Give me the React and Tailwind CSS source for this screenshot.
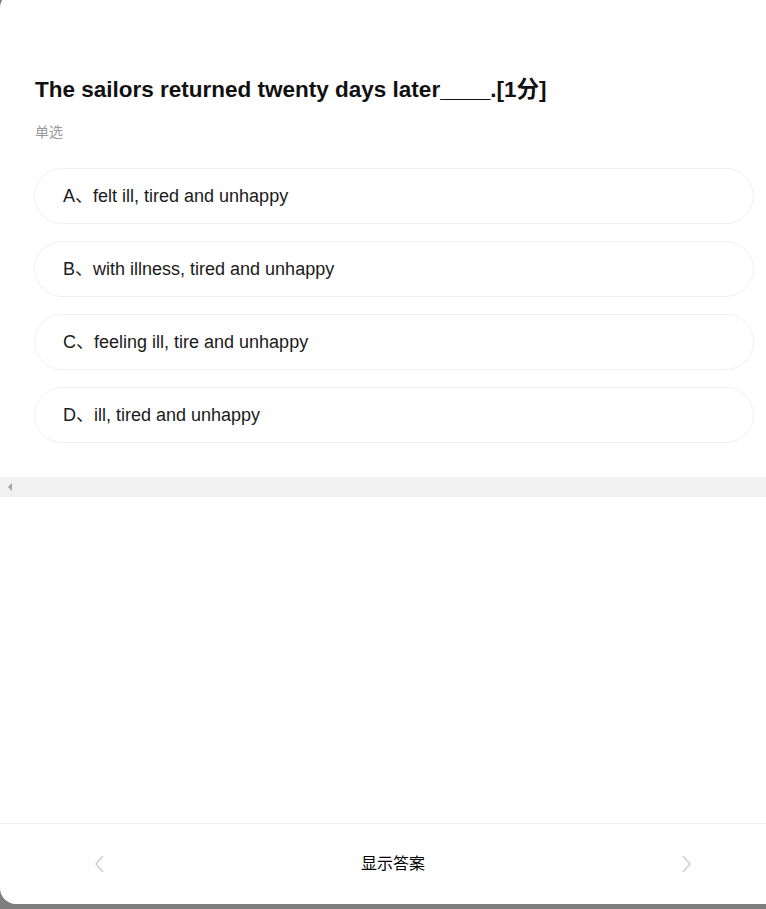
import React from 'react';

const options = [
    { key: 'A', text: 'felt ill, tired and unhappy' },
    { key: 'B', text: 'with illness, tired and unhappy' },
    { key: 'C', text: 'feeling ill, tire and unhappy' },
    { key: 'D', text: 'ill, tired and unhappy' },
];

function App() {
    return (
        <div className="w-[766px] h-[909px] overflow-hidden bg-[#7f7f7f]" style={{ fontFamily: '"Liberation Sans", Arial, "Noto Sans CJK SC", sans-serif' }}>
            <div className="-mt-[8px] h-[912px] bg-white rounded-l-[16px] flex flex-col">
                {/* question */}
                <div className="pt-[83px] px-[35px]">
                    <h1 className="text-[22.5px] leading-[30px] font-bold text-[#111]">
                        The sailors returned twenty days later____.[1分]
                    </h1>
                    <div className="mt-[17px] text-[14px] leading-[20px] text-[#999]">单选</div>
                </div>

                <div className="mt-[26px] pl-[34px] pr-[12px] flex flex-col gap-[17px]">
                    {options.map((o) => (
                        <div
                            key={o.key}
                            className="h-[56px] rounded-full border border-[#efefef] flex items-center pl-[28px] text-[18px] text-[#1a1a1a]"
                        >
                            {o.key}、{o.text}
                        </div>
                    ))}
                </div>

                {/* horizontal scrollbar */}
                <div className="mt-[34px] h-[20px] bg-[#f1f1f1] flex items-center pl-[7px]">
                    <svg width="6" height="10" viewBox="0 0 6 10">
                        <path d="M5 1 L1 5 L5 9 Z" fill="#a3a3a3" />
                    </svg>
                </div>

                <div className="flex-1" />

                {/* footer */}
                <div className="border-t border-[#f0f0f0] h-[81px] flex items-center justify-between pl-[94px] pr-[74px]">
                    <svg width="12" height="20" viewBox="0 0 12 20" fill="none">
                        <path d="M9 2 L2 10 L9 18" stroke="#cfcfcf" strokeWidth="1.5" />
                    </svg>
                    <button className="text-[16px] text-[#000]">显示答案</button>
                    <svg width="12" height="20" viewBox="0 0 12 20" fill="none">
                        <path d="M3 2 L10 10 L3 18" stroke="#cfcfcf" strokeWidth="1.5" />
                    </svg>
                </div>
            </div>
        </div>
    );
}

export default App;
